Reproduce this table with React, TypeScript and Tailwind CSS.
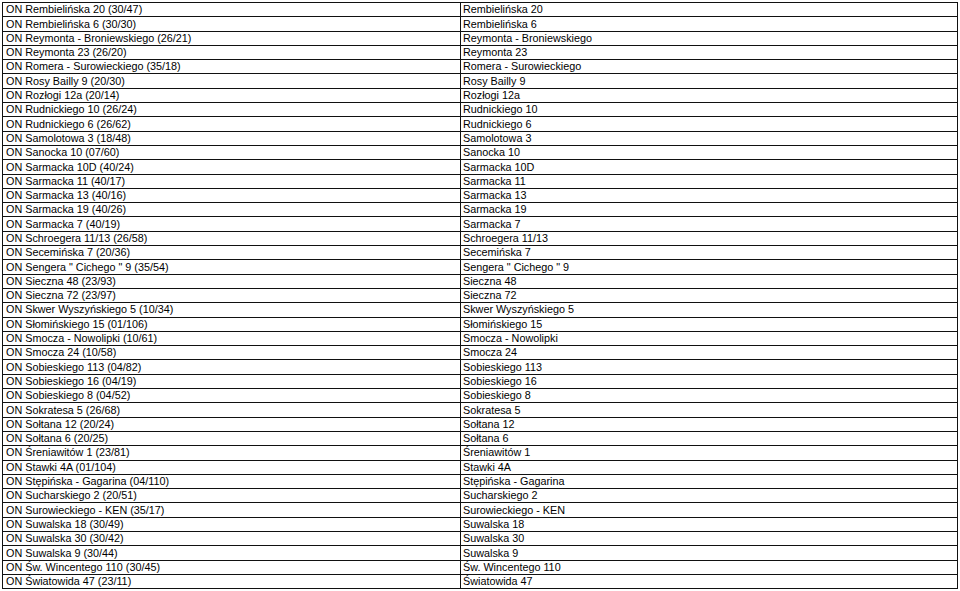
const rows: [string, string][] = [
  ['ON Rembielińska 20 (30/47)', 'Rembielińska 20'],
  ['ON Rembielińska 6 (30/30)', 'Rembielińska 6'],
  ['ON Reymonta - Broniewskiego (26/21)', 'Reymonta - Broniewskiego'],
  ['ON Reymonta 23 (26/20)', 'Reymonta 23'],
  ['ON Romera - Surowieckiego (35/18)', 'Romera - Surowieckiego'],
  ['ON Rosy Bailly 9 (20/30)', 'Rosy Bailly 9'],
  ['ON Rozłogi 12a (20/14)', 'Rozłogi 12a'],
  ['ON Rudnickiego 10 (26/24)', 'Rudnickiego 10'],
  ['ON Rudnickiego 6 (26/62)', 'Rudnickiego 6'],
  ['ON Samolotowa 3 (18/48)', 'Samolotowa 3'],
  ['ON Sanocka 10 (07/60)', 'Sanocka 10'],
  ['ON Sarmacka 10D (40/24)', 'Sarmacka 10D'],
  ['ON Sarmacka 11 (40/17)', 'Sarmacka 11'],
  ['ON Sarmacka 13 (40/16)', 'Sarmacka 13'],
  ['ON Sarmacka 19 (40/26)', 'Sarmacka 19'],
  ['ON Sarmacka 7 (40/19)', 'Sarmacka 7'],
  ['ON Schroegera 11/13 (26/58)', 'Schroegera 11/13'],
  ['ON Secemińska 7 (20/36)', 'Secemińska 7'],
  ['ON Sengera " Cichego " 9 (35/54)', 'Sengera " Cichego " 9'],
  ['ON Sieczna 48 (23/93)', 'Sieczna 48'],
  ['ON Sieczna 72 (23/97)', 'Sieczna 72'],
  ['ON Skwer Wyszyńskiego 5 (10/34)', 'Skwer Wyszyńskiego 5'],
  ['ON Słomińskiego 15 (01/106)', 'Słomińskiego 15'],
  ['ON Smocza - Nowolipki (10/61)', 'Smocza - Nowolipki'],
  ['ON Smocza 24 (10/58)', 'Smocza 24'],
  ['ON Sobieskiego 113 (04/82)', 'Sobieskiego 113'],
  ['ON Sobieskiego 16 (04/19)', 'Sobieskiego 16'],
  ['ON Sobieskiego 8 (04/52)', 'Sobieskiego 8'],
  ['ON Sokratesa 5 (26/68)', 'Sokratesa 5'],
  ['ON Sołtana 12 (20/24)', 'Sołtana 12'],
  ['ON Sołtana 6 (20/25)', 'Sołtana 6'],
  ['ON Śreniawitów 1 (23/81)', 'Śreniawitów 1'],
  ['ON Stawki 4A (01/104)', 'Stawki 4A'],
  ['ON Stępińska - Gagarina (04/110)', 'Stępińska - Gagarina'],
  ['ON Sucharskiego 2 (20/51)', 'Sucharskiego 2'],
  ['ON Surowieckiego - KEN (35/17)', 'Surowieckiego - KEN'],
  ['ON Suwalska 18 (30/49)', 'Suwalska 18'],
  ['ON Suwalska 30 (30/42)', 'Suwalska 30'],
  ['ON Suwalska 9 (30/44)', 'Suwalska 9'],
  ['ON Św. Wincentego 110 (30/45)', 'Św. Wincentego 110'],
  ['ON Światowida 47 (23/11)', 'Światowida 47'],
];

export default function App() {
  return (
    <div
      className="h-[591px] w-[960px] bg-white pt-[2px] pl-[2px] text-[10.8px] text-black"
      style={{ fontFamily: '"Liberation Sans", Arial, sans-serif' }}
    >
      <div className="w-[956px] border-t border-l border-[#111]">
        {rows.map(([name, street]) => (
          <div
            key={name}
            className="grid h-[14.31px] grid-cols-[458px_1fr] border-b border-[#111]"
          >
            <div className="flex items-center border-r border-[#111] pl-[3px] leading-none whitespace-nowrap">
              {name}
            </div>
            <div className="flex items-center border-r border-[#111] pl-[2px] leading-none whitespace-nowrap">
              {street}
            </div>
          </div>
        ))}
      </div>
    </div>
  );
}
